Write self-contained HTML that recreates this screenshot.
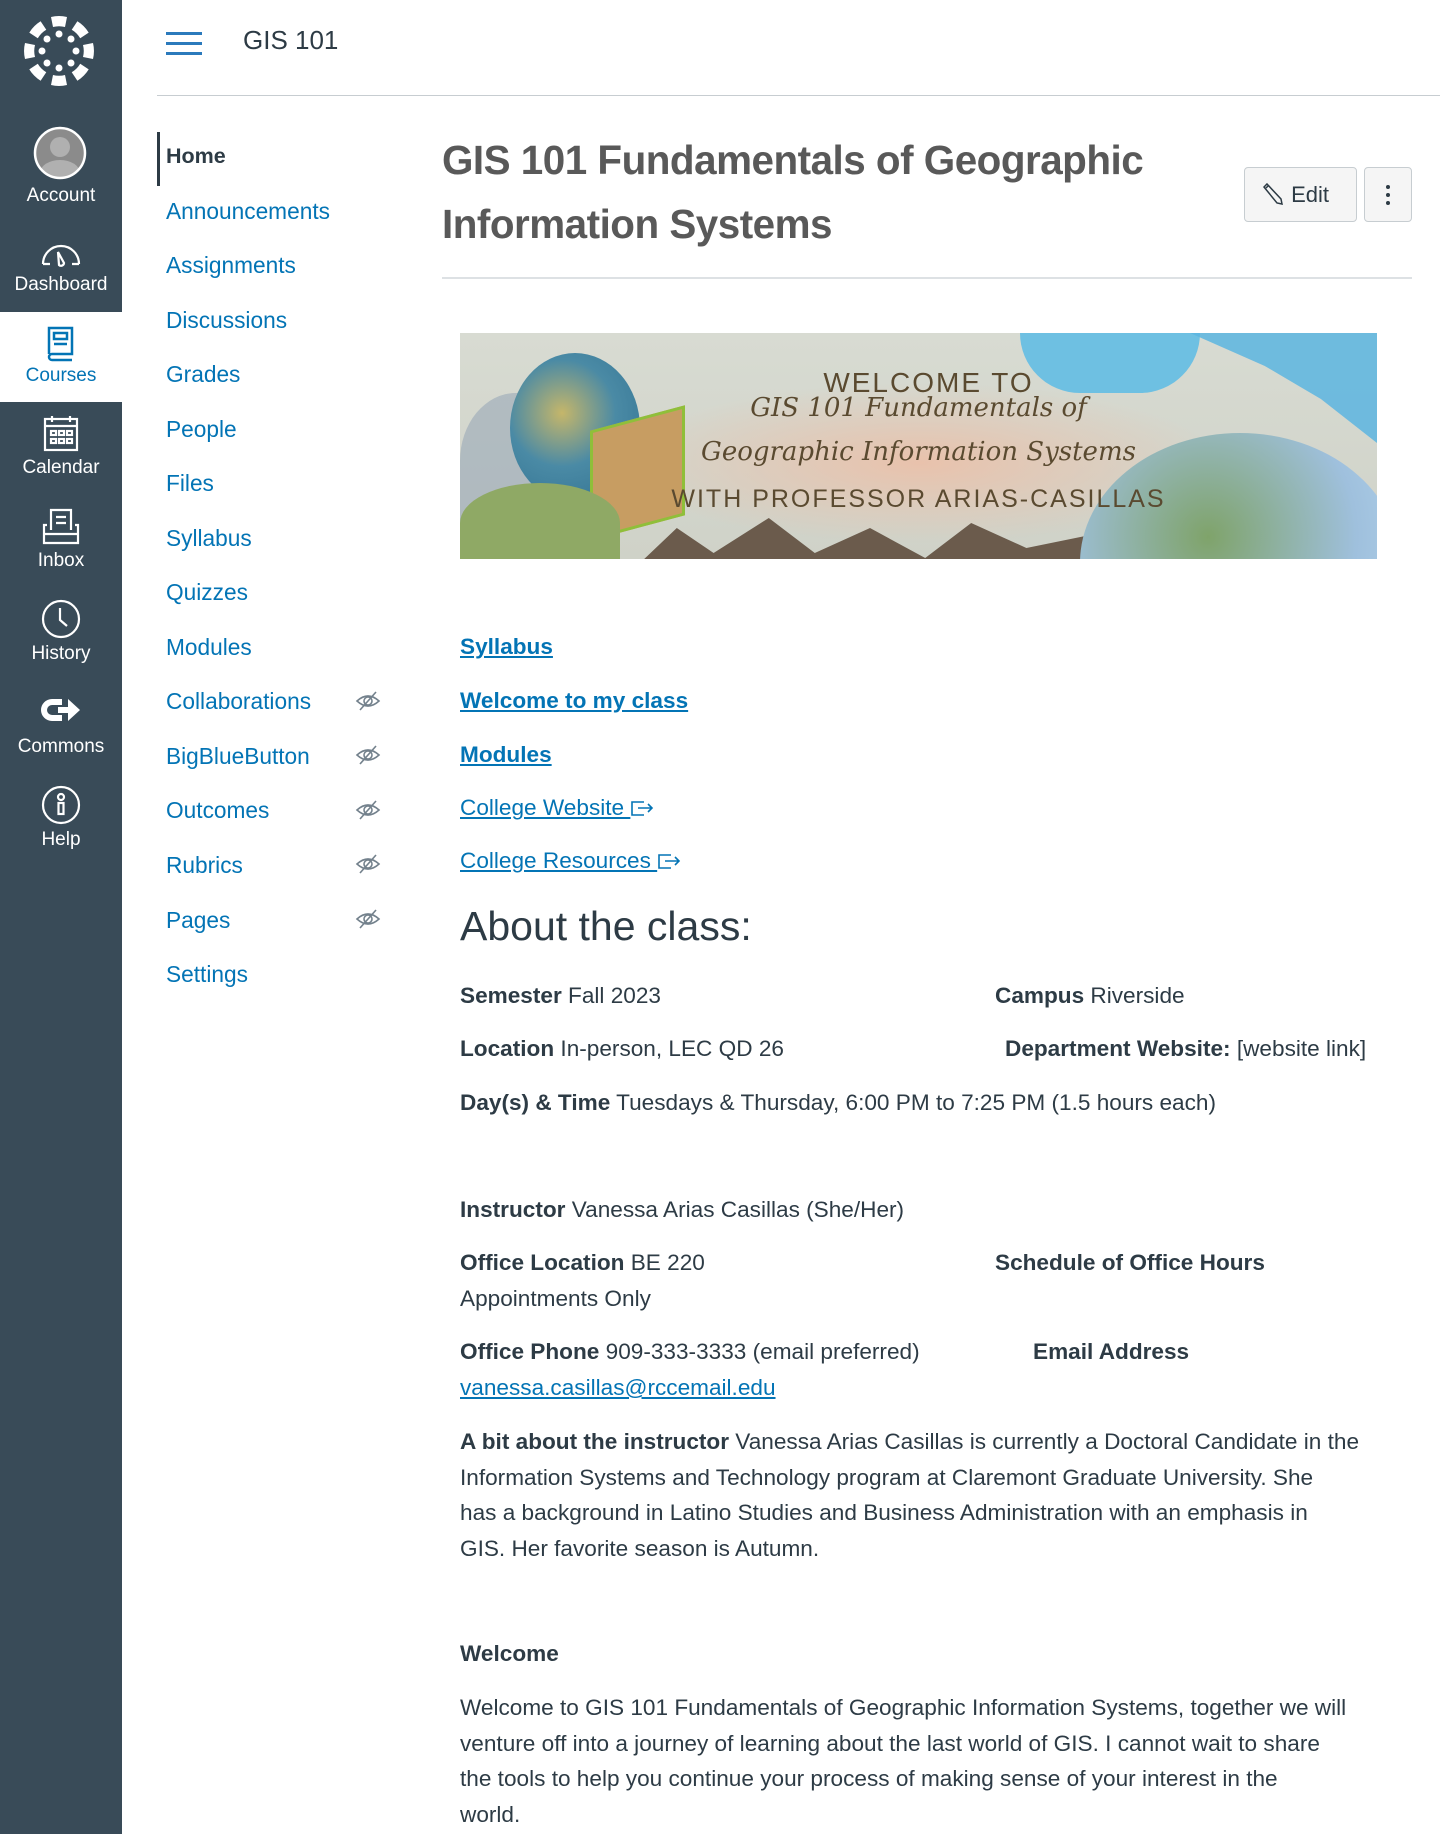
<!DOCTYPE html>
<html><head><meta charset="utf-8">
<style>
*{margin:0;padding:0;box-sizing:border-box}
body{width:1440px;height:1834px;position:relative;background:#fff;font-family:"Liberation Sans",sans-serif;color:#2d3b45;overflow:hidden}
.a{position:absolute;white-space:nowrap}
#side{position:absolute;left:0;top:0;width:122px;height:1834px;background:#394b58}
.si{position:absolute;left:0;width:122px;text-align:center;color:#fff;font-size:19px}
.nav{position:absolute;left:166px;font-size:22.7px;color:#0374b5;line-height:30px}
.eye{position:absolute;left:355px}
.lnk{color:#0374b5;text-decoration:underline}
.b{font-weight:bold}
.t{font-size:22.6px;line-height:30px}
</style></head><body>
<div id="side">
  <svg class="a" style="left:22px;top:14px" width="74" height="74" viewBox="-37 -37 74 74" fill="#fff">
    <g>
      <path d="M-8,-34 A34,34 0 0 1 8,-34 L6,-24 A24,24 0 0 0 -6,-24Z"/>
      <path d="M-8,-34 A34,34 0 0 1 8,-34 L6,-24 A24,24 0 0 0 -6,-24Z" transform="rotate(45)"/>
      <path d="M-8,-34 A34,34 0 0 1 8,-34 L6,-24 A24,24 0 0 0 -6,-24Z" transform="rotate(90)"/>
      <path d="M-8,-34 A34,34 0 0 1 8,-34 L6,-24 A24,24 0 0 0 -6,-24Z" transform="rotate(135)"/>
      <path d="M-8,-34 A34,34 0 0 1 8,-34 L6,-24 A24,24 0 0 0 -6,-24Z" transform="rotate(180)"/>
      <path d="M-8,-34 A34,34 0 0 1 8,-34 L6,-24 A24,24 0 0 0 -6,-24Z" transform="rotate(225)"/>
      <path d="M-8,-34 A34,34 0 0 1 8,-34 L6,-24 A24,24 0 0 0 -6,-24Z" transform="rotate(270)"/>
      <path d="M-8,-34 A34,34 0 0 1 8,-34 L6,-24 A24,24 0 0 0 -6,-24Z" transform="rotate(315)"/>
      <circle cx="0" cy="-17" r="3.5"/><circle cx="12" cy="-12" r="3.5"/><circle cx="17" cy="0" r="3.5"/><circle cx="12" cy="12" r="3.5"/>
      <circle cx="0" cy="17" r="3.5"/><circle cx="-12" cy="12" r="3.5"/><circle cx="-17" cy="0" r="3.5"/><circle cx="-12" cy="-12" r="3.5"/>
    </g>
  </svg>
  <svg class="a" style="left:32px;top:125px" width="56" height="56" viewBox="0 0 56 56">
    <clipPath id="c"><circle cx="28" cy="28" r="25"/></clipPath>
    <circle cx="28" cy="28" r="25" fill="#8b8b8b"/>
    <g clip-path="url(#c)" fill="#b0b0b0"><circle cx="28" cy="22" r="10"/><ellipse cx="28" cy="48" rx="20" ry="13"/></g>
    <circle cx="28" cy="28" r="25" fill="none" stroke="#fff" stroke-width="2.5"/>
  </svg>
  <div class="si" style="top:185px">Account</div>
  <svg class="a" style="left:40px;top:238px" width="42" height="30" viewBox="0 0 42 30" fill="none" stroke="#fff" stroke-width="2.2">
    <path d="M3,26 A18,18 0 1 1 39,26 M3,26h7 M32,26h7"/><path d="M18,14 L24,25 A3,3 0 0 1 19,27Z"/>
  </svg>
  <div class="si" style="top:274px">Dashboard</div>
  <div style="position:absolute;left:0;top:312px;width:122px;height:90px;background:#fff"></div>
  <svg class="a" style="left:45px;top:324px" width="30" height="38" viewBox="0 0 30 38" fill="none" stroke="#0374b5" stroke-width="2.5">
    <path d="M4,30 V4 H27 V30 H7 A3,3 0 0 0 7,36 H27"/><rect x="9" y="9" width="13" height="6"/><path d="M9,20h13"/>
  </svg>
  <div class="si" style="top:365px;color:#0374b5">Courses</div>
  <svg class="a" style="left:43px;top:414px" width="36" height="38" viewBox="0 0 36 38" fill="none" stroke="#fff" stroke-width="2.2">
    <rect x="2" y="5" width="32" height="31"/><path d="M2,12h32 M9,2v6 M27,2v6"/>
    <rect x="8" y="17" width="5" height="4"/><rect x="16" y="17" width="5" height="4"/><rect x="24" y="17" width="5" height="4"/>
    <rect x="8" y="25" width="5" height="4"/><rect x="16" y="25" width="5" height="4"/><rect x="24" y="25" width="5" height="4"/>
  </svg>
  <div class="si" style="top:457px">Calendar</div>
  <svg class="a" style="left:41px;top:508px" width="40" height="38" viewBox="0 0 40 38" fill="none" stroke="#fff" stroke-width="2.2">
    <path d="M10,22 V2 H30 V22"/><path d="M15,9h10 M15,15h10"/><path d="M6,17 H3 V35 H37 V17 H34 M3,26 H37"/>
  </svg>
  <div class="si" style="top:550px">Inbox</div>
  <svg class="a" style="left:40px;top:598px" width="42" height="42" viewBox="0 0 42 42" fill="none" stroke="#fff" stroke-width="2.2">
    <circle cx="21" cy="21" r="18"/><path d="M20,10v12l7,6"/>
  </svg>
  <div class="si" style="top:643px">History</div>
  <svg class="a" style="left:40px;top:693px" width="42" height="34" viewBox="0 0 42 34">
    <path d="M22,6 H12 A11,11 0 0 0 12,28 H22 V22 H12 A5,5 0 0 1 12,12 H22Z" fill="#fff"/>
    <path d="M18,14 H28 V6 L40,17 L28,28 V20 H18Z" fill="#fff"/>
  </svg>
  <div class="si" style="top:736px">Commons</div>
  <svg class="a" style="left:40px;top:784px" width="42" height="42" viewBox="0 0 42 42" fill="none" stroke="#fff" stroke-width="2.2">
    <circle cx="21" cy="21" r="18"/><circle cx="21" cy="13" r="3"/><rect x="18.5" y="19" width="5" height="11"/>
  </svg>
  <div class="si" style="top:829px">Help</div>
</div>

<div class="a" style="left:166px;top:32px;width:36px;height:3px;background:#2b7abc"></div>
<div class="a" style="left:166px;top:42px;width:36px;height:3px;background:#2b7abc"></div>
<div class="a" style="left:166px;top:52px;width:36px;height:3px;background:#2b7abc"></div>
<div class="a" style="left:243px;top:25px;font-size:26px;color:#2d3b45">GIS 101</div>
<div class="a" style="left:157px;top:95px;width:1283px;height:1px;background:#c7cdd1"></div>

<div class="a" style="left:157px;top:132px;width:3px;height:54px;background:#2d3b45"></div>
<div class="nav" style="top:141px;color:#2d3b45;font-weight:bold;font-size:21.5px">Home</div>
<div class="nav" style="top:196px">Announcements</div>
<div class="nav" style="top:250px">Assignments</div>
<div class="nav" style="top:305px">Discussions</div>
<div class="nav" style="top:359px">Grades</div>
<div class="nav" style="top:414px">People</div>
<div class="nav" style="top:468px">Files</div>
<div class="nav" style="top:523px">Syllabus</div>
<div class="nav" style="top:577px">Quizzes</div>
<div class="nav" style="top:632px">Modules</div>
<div class="nav" style="top:686px">Collaborations</div>
<div class="nav" style="top:741px">BigBlueButton</div>
<div class="nav" style="top:795px">Outcomes</div>
<div class="nav" style="top:850px">Rubrics</div>
<div class="nav" style="top:905px">Pages</div>
<div class="nav" style="top:959px">Settings</div>
<svg width="0" height="0" style="position:absolute"><defs><g id="eye" fill="none" stroke="#73818c" stroke-width="1.6"><path d="M2,11 Q13,1 24,11 Q13,21 2,11Z"/><circle cx="13" cy="11" r="4"/><path d="M5,20 L21,2"/></g></defs></svg>
<svg class="eye" style="top:690px" width="26" height="22"><use href="#eye"/></svg>
<svg class="eye" style="top:744px" width="26" height="22"><use href="#eye"/></svg>
<svg class="eye" style="top:799px" width="26" height="22"><use href="#eye"/></svg>
<svg class="eye" style="top:853px" width="26" height="22"><use href="#eye"/></svg>
<svg class="eye" style="top:908px" width="26" height="22"><use href="#eye"/></svg>

<div class="a" style="left:442px;top:128px;font-size:40.4px;font-weight:bold;color:#595959;line-height:64px;white-space:normal;width:770px;letter-spacing:-0.5px">GIS 101 Fundamentals of Geographic Information Systems</div>
<div class="a" style="left:1244px;top:167px;width:113px;height:55px;background:#f5f5f5;border:1px solid #c7cdd1;border-radius:4px;font-size:22px;color:#2d3b45;line-height:53px;padding-left:18px">
  <svg style="vertical-align:-4px" width="22" height="24" viewBox="0 0 22 24" fill="none" stroke="#2d3b45" stroke-width="1.5"><path d="M4,2 L18,17 L19,22 L14,21 L1,5Z M3,6 L6,3"/></svg> Edit</div>
<div class="a" style="left:1364px;top:167px;width:48px;height:55px;background:#f5f5f5;border:1px solid #c7cdd1;border-radius:4px">
  <div class="a" style="left:21px;top:17px;width:4px;height:4px;border-radius:2px;background:#2d3b45"></div>
  <div class="a" style="left:21px;top:25px;width:4px;height:4px;border-radius:2px;background:#2d3b45"></div>
  <div class="a" style="left:21px;top:33px;width:4px;height:4px;border-radius:2px;background:#2d3b45"></div>
</div>
<div class="a" style="left:442px;top:277px;width:970px;height:2px;background:#dde1e4"></div>

<div class="a" style="left:460px;top:333px;width:917px;height:226px;overflow:hidden;background:radial-gradient(ellipse 300px 80px at 460px 130px,#e9c2ac,transparent),linear-gradient(#d8dbd2,#cfd2c8)">
  <div class="a" style="left:0;top:60px;width:140px;height:170px;background:#9aa8b8;opacity:.6;border-radius:40% 60% 0 0"></div>
  <div class="a" style="left:50px;top:20px;width:130px;height:150px;border-radius:50%;background:radial-gradient(circle at 40% 40%,#c5b66a,#4a8aa5 45%,#2f6f8f)"></div>
  <div class="a" style="left:130px;top:85px;width:95px;height:110px;background:#c79d62;transform:skewY(-15deg);border:3px solid #8fbf3a"></div>
  <div class="a" style="left:0;top:150px;width:160px;height:80px;background:#8fa965;border-radius:50% 50% 0 0"></div>
  <div class="a" style="left:180px;top:180px;width:460px;height:50px;background:#6b5b4c;clip-path:polygon(0 100%,8% 30%,16% 80%,28% 10%,38% 80%,50% 30%,62% 90%,72% 20%,84% 70%,100% 40%,100% 100%)"></div>
  <div class="a" style="left:560px;top:0;width:180px;height:60px;background:#6ec0e2;border-radius:0 0 60px 60px"></div>
  <div class="a" style="left:730px;top:0;width:187px;height:110px;background:#5cb5e0;opacity:.85;clip-path:polygon(0 0,100% 0,100% 100%,70% 60%,40% 30%)"></div>
  <div class="a" style="left:620px;top:100px;width:320px;height:260px;border-radius:50%;background:radial-gradient(circle at 40% 40%,#7fa36a,#9fc0dd 60%,#b7d8ef)"></div>
  <div class="a" style="left:0;top:34px;width:917px;text-align:center;font-family:'Liberation Sans Narrow','Liberation Sans',sans-serif;color:#5a4a30;font-size:28px;letter-spacing:2px;padding-left:20px">WELCOME TO</div>
  <div class="a" style="left:0;top:60px;width:917px;text-align:center;font-family:'DejaVu Serif',serif;font-style:italic;color:#5a4a30;font-size:26px">GIS 101 Fundamentals of</div>
  <div class="a" style="left:0;top:104px;width:917px;text-align:center;font-family:'DejaVu Serif',serif;font-style:italic;color:#5a4a30;font-size:26px">Geographic Information Systems</div>
  <div class="a" style="left:0;top:152px;width:917px;text-align:center;font-family:'Liberation Sans Narrow','Liberation Sans',sans-serif;color:#5a4a30;font-size:25px;letter-spacing:2px">WITH PROFESSOR ARIAS-CASILLAS</div>
</div>

<div class="a t b lnk" style="left:460px;top:632px">Syllabus</div>
<div class="a t b lnk" style="left:460px;top:686px">Welcome to my class</div>
<div class="a t b lnk" style="left:460px;top:740px">Modules</div>
<div class="a t lnk" style="left:460px;top:793px">College Website <svg style="vertical-align:-3px" width="24" height="20" viewBox="0 0 24 20" fill="none" stroke="#0374b5" stroke-width="1.6"><path d="M14,4 H2 V17 H14 M8,10 H22 M18,6 L22,10 L18,14"/></svg></div>
<div class="a t lnk" style="left:460px;top:846px">College Resources <svg style="vertical-align:-3px" width="24" height="20" viewBox="0 0 24 20" fill="none" stroke="#0374b5" stroke-width="1.6"><path d="M14,4 H2 V17 H14 M8,10 H22 M18,6 L22,10 L18,14"/></svg></div>
<div class="a" style="left:460px;top:903px;font-size:41px;color:#2d3b45">About the class:</div>

<div class="a t" style="left:460px;top:981px"><span class="b">Semester</span> Fall 2023</div>
<div class="a t" style="left:995px;top:981px"><span class="b">Campus</span> Riverside</div>
<div class="a t" style="left:460px;top:1034px"><span class="b">Location</span> In-person, LEC QD 26</div>
<div class="a t" style="left:1005px;top:1034px"><span class="b">Department Website:</span> [website link]</div>
<div class="a t" style="left:460px;top:1088px"><span class="b">Day(s) &amp; Time</span> Tuesdays &amp; Thursday, 6:00 PM to 7:25 PM (1.5 hours each)</div>
<div class="a t" style="left:460px;top:1195px"><span class="b">Instructor</span> Vanessa Arias Casillas (She/Her)</div>
<div class="a t" style="left:460px;top:1248px"><span class="b">Office Location</span> BE 220</div>
<div class="a t b" style="left:995px;top:1248px">Schedule of Office Hours</div>
<div class="a t" style="left:460px;top:1284px">Appointments Only</div>
<div class="a t" style="left:460px;top:1337px"><span class="b">Office Phone</span> 909-333-3333 (email preferred)</div>
<div class="a t b" style="left:1033px;top:1337px">Email Address</div>
<div class="a t lnk" style="left:460px;top:1373px">vanessa.casillas@rccemail.edu</div>
<div class="a t" style="left:460px;top:1424px;line-height:35.5px"><span class="b">A bit about the instructor</span> Vanessa Arias Casillas is currently a Doctoral Candidate in the<br>Information Systems and Technology program at Claremont Graduate University. She<br>has a background in Latino Studies and Business Administration with an emphasis in<br>GIS. Her favorite season is Autumn.</div>
<div class="a t b" style="left:460px;top:1639px">Welcome</div>
<div class="a t" style="left:460px;top:1690px;line-height:35.5px">Welcome to GIS 101 Fundamentals of Geographic Information Systems, together we will<br>venture off into a journey of learning about the last world of GIS. I cannot wait to share<br>the tools to help you continue your process of making sense of your interest in the<br>world.</div>
</body></html>
